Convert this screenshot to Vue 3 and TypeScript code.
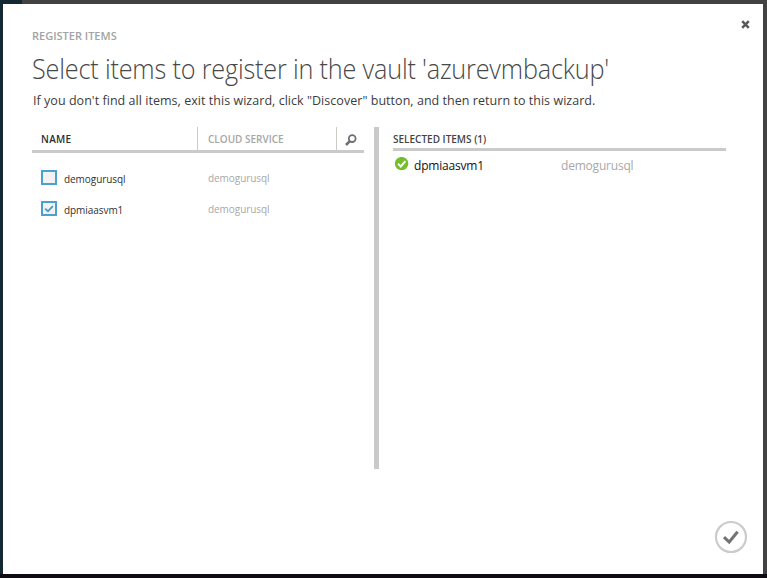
<script setup lang="ts">
import { ref, computed } from 'vue'

interface VaultItem {
  name: string
  service: string
  checked: boolean
}

const items = ref<VaultItem[]>([
  { name: 'demogurusql', service: 'demogurusql', checked: false },
  { name: 'dpmiaasvm1', service: 'demogurusql', checked: true },
])

const selected = computed(() => items.value.filter((i) => i.checked))
</script>

<template>
  <div class="backdrop">
    <section class="dialog">
      <header class="head">
        <div class="heading">
          <p class="eyebrow">REGISTER ITEMS</p>
          <h1 class="title"><span>Select items to register in the vault 'azurevmbackup'</span></h1>
          <p class="hint">If you don't find all items, exit this wizard, click "Discover" button, and then return to this wizard.</p>
        </div>
        <button class="close" aria-label="Close">
          <svg width="9" height="9" viewBox="0 0 9 9"><path d="M1.2 1.2 7.8 7.8M7.8 1.2 1.2 7.8" stroke="#595959" stroke-width="2.5" /></svg>
        </button>
      </header>

      <main class="panes">
        <div class="available">
          <div class="columns">
            <div class="col name">NAME</div>
            <div class="col service">CLOUD SERVICE</div>
            <button class="col search" aria-label="Search">
              <svg width="12" height="12" viewBox="0 0 12 12" fill="none" stroke="#6b7075">
                <circle cx="7.2" cy="4.6" r="3.4" stroke-width="1.8" />
                <path d="M4.8 7.2 1 11" stroke-width="2.6" />
              </svg>
            </button>
          </div>
          <ul class="rows">
            <li v-for="item in items" :key="item.name" class="row" @click="item.checked = !item.checked">
              <span class="box">
                <svg v-if="item.checked" width="10" height="8" viewBox="0 0 10 8"><path d="M1.2 3.6 4 6.3 8.8 1.2" fill="none" stroke="#3f9acb" stroke-width="1.8" /></svg>
              </span>
              <span class="item-name">{{ item.name }}</span>
              <span class="item-service">{{ item.service }}</span>
            </li>
          </ul>
        </div>

        <div class="divider"></div>

        <div class="chosen">
          <div class="chosen-head">SELECTED ITEMS ({{ selected.length }})</div>
          <div v-for="item in selected" :key="item.name" class="chosen-row">
            <svg width="14" height="14" viewBox="0 0 14 14">
              <circle cx="6.6" cy="6.6" r="6.7" fill="#74bd2b" />
              <path d="M3 6.8 5.8 9.5 10.4 4.2" fill="none" stroke="#fff" stroke-width="2" />
            </svg>
            <span class="chosen-name">{{ item.name }}</span>
            <span class="chosen-service">{{ item.service }}</span>
          </div>
        </div>
      </main>

      <footer class="foot">
        <button class="done" aria-label="Complete">
          <svg width="34" height="34" viewBox="0 0 34 34" fill="none">
            <circle cx="17" cy="17" r="15" stroke="#cbcbcb" stroke-width="2.2" />
            <path d="M10 17.2 15.2 22 23.6 11.8" stroke="#737373" stroke-width="3" />
          </svg>
        </button>
      </footer>
    </section>
  </div>
</template>

<style>
body {
  margin: 0;
}
</style>

<style scoped>
.backdrop {
  box-sizing: border-box;
  width: 767px;
  height: 578px;
  padding: 4px 4px 4px 3px;
  background:
    linear-gradient(#0e0c12, #0e0c12) 0 574px / 767px 4px no-repeat,
    linear-gradient(#132833, #132833) 0 0 / 22px 578px no-repeat,
    #424242;
  font-family: 'Open Sans', 'Noto Sans', sans-serif;
  overflow: hidden;
}
.dialog {
  display: flex;
  flex-direction: column;
  height: 570px;
  background: #fff;
}
p,
h1,
ul {
  margin: 0;
  padding: 0;
  font-weight: 400;
}
button {
  padding: 0;
  border: 0;
  background: none;
  font: inherit;
}
svg {
  display: block;
}
.head {
  display: flex;
  justify-content: space-between;
  height: 123px;
  padding-left: 29px;
  white-space: nowrap;
}
.eyebrow {
  padding-top: 24px;
  font-size: 11px;
  font-weight: 600;
  line-height: 16px;
  color: #a3a3a3;
}
.title {
  padding-top: 6px;
  font-size: 27px;
  font-weight: 300;
  line-height: 38px;
  color: #484848;
  letter-spacing: -0.2px;
}
.title span {
  display: inline-block;
  transform: scaleX(0.935);
  transform-origin: left;
}
.hint {
  padding: 4px 0 0 1px;
  font-size: 12.5px;
  line-height: 18px;
  letter-spacing: 0.04px;
  color: #3c3c3c;
}
.close {
  align-self: flex-start;
  margin: 16px 13px 0 0;
}
.panes {
  display: flex;
  height: 342px;
  padding-left: 29px;
}
.available {
  width: 332px;
}
.columns {
  display: flex;
  height: 23px;
  border-bottom: 3px solid #cacaca;
  font-size: 10px;
  font-weight: 600;
  line-height: 25px;
}
.col {
  box-sizing: border-box;
}
.name {
  width: 165px;
  padding-left: 9px;
  letter-spacing: 0.3px;
  color: #2e2e2e;
}
.service {
  width: 139px;
  padding-left: 10px;
  border-left: 1px solid #cacaca;
  color: #a6a6a6;
}
.search {
  flex: 1;
  padding: 2px 0 0 8px;
  border-left: 1px solid #cacaca;
}
.rows {
  padding-top: 10px;
  list-style: none;
}
.row {
  display: flex;
  height: 31px;
  padding-left: 9px;
  font-size: 10px;
  line-height: 31px;
  letter-spacing: -0.06px;
}
.box {
  display: flex;
  align-items: center;
  justify-content: center;
  box-sizing: border-box;
  width: 16px;
  height: 15px;
  margin-top: 7px;
  border: 2px solid #4ba0cf;
  background: #f2f2f2;
}
.item-name {
  width: 144px;
  padding-left: 7px;
  line-height: 33px;
  color: #303030;
}
.item-service {
  color: #a8a8a8;
}
.divider {
  width: 5px;
  margin: 0 14px 0 10px;
  background: #cacaca;
}
.chosen {
  width: 333px;
}
.chosen-head {
  height: 21px;
  border-bottom: 3px solid #cacaca;
  font-size: 10px;
  font-weight: 600;
  line-height: 25px;
  color: #444;
}
.chosen-row {
  display: flex;
  padding: 6px 0 0 2px;
  font-size: 12px;
  line-height: 18px;
  letter-spacing: -0.2px;
}
.chosen-name {
  width: 147px;
  padding-left: 5px;
  color: #111;
}
.chosen-service {
  color: #a8a8a8;
}
.foot {
  display: flex;
  justify-content: flex-end;
  padding: 51px 15px 0 0;
}
</style>
